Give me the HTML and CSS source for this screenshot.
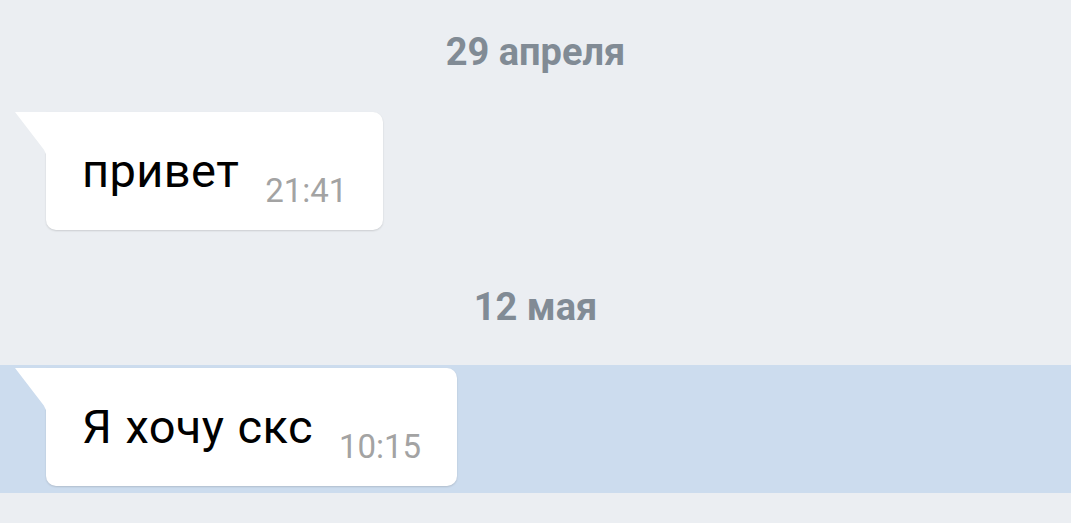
FILE: index.html
```html
<!DOCTYPE html>
<html lang="ru">
<head>
    <meta charset="UTF-8">
    <meta name="viewport" content="width=device-width, initial-scale=1.0">
    <title>Сообщения</title>
    <link rel="stylesheet" href="styles.css">
</head>
<body>
    <div class="chat">
        <div class="date">29 апреля</div>

        <div class="row">
            <div class="bubble">
                <span class="text">привет</span>
                <span class="time">21:41</span>
            </div>
        </div>

        <div class="date date-second">12 мая</div>

        <div class="row row-selected">
            <div class="bubble">
                <span class="text">Я хочу скс</span>
                <span class="time">10:15</span>
            </div>
        </div>
    </div>
</body>
</html>
```

FILE: styles.css
```css
body {
    margin: 0;
    padding: 0;
    background-color: #ebeef2;
    font-family: 'Roboto', 'Noto Sans', sans-serif;
    height: 523px;
    overflow: hidden;
}

.chat {
    display: flex;
    flex-direction: column;
}

.date {
    text-align: center;
    color: #818b95;
    font-weight: bold;
    font-size: 38px;
    line-height: 44px;
    padding-top: 30px;
    padding-bottom: 38px;
}

.date-second {
    padding-top: 55px;
    padding-bottom: 36px;
}

.row {
    padding: 0 0 0 46px;
}

.row-selected {
    background-color: #ccdcee;
    padding-top: 3px;
    padding-bottom: 7px;
}

.bubble {
    position: relative;
    display: inline-flex;
    align-items: flex-end;
    background-color: #fff;
    border-radius: 0 10px 10px 10px;
    box-shadow: 0 1px 2px rgba(0, 0, 0, 0.14);
    padding: 33px 36px 23px 36px;
}

/* tail at the top-left corner */
.bubble::before {
    content: "";
    position: absolute;
    left: -31px;
    top: 0;
    width: 32px;
    height: 48px;
    background-color: #fff;
    clip-path: polygon(0 0, 100% 0, 100% 100%, 97% 88%, 90% 78%);
}

.text {
    color: #000;
    font-size: 47px;
    line-height: 52px;
    letter-spacing: 0.4px;
    word-spacing: 1px;
    padding-bottom: 10px;
}

.time {
    color: #a3a3a3;
    font-size: 33px;
    line-height: 33px;
    margin-left: 26px;
}
```
